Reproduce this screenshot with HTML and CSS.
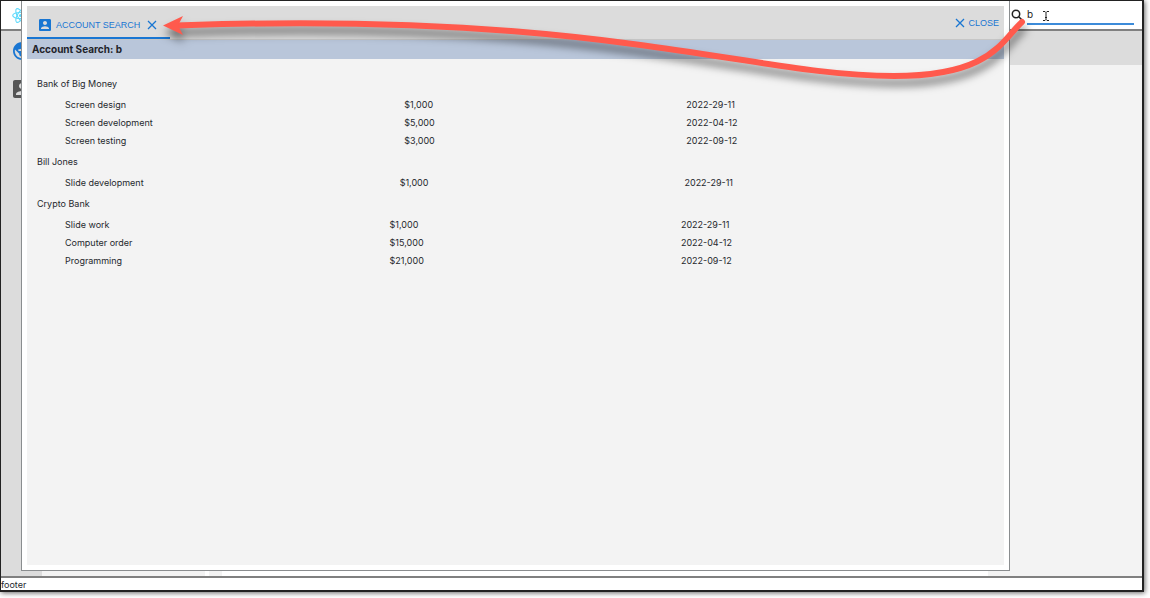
FILE: index.html
```html
<!DOCTYPE html>
<html lang="en">
<head>
<meta charset="utf-8">
<title>Account Search</title>
<link rel="stylesheet" href="styles.css">
</head>
<body>
<div class="app">
  <header class="topbar">
    <svg class="logo" viewBox="0 0 24 24" aria-hidden="true"><g fill="none" stroke="#61dafb" stroke-width="1.6"><ellipse cx="12" cy="12" rx="11" ry="4.3"/><ellipse cx="12" cy="12" rx="11" ry="4.3" transform="rotate(60 12 12)"/><ellipse cx="12" cy="12" rx="11" ry="4.3" transform="rotate(120 12 12)"/></g><circle cx="12" cy="12" r="2.2" fill="#61dafb"/></svg>
    <label class="search">
      <svg class="search-icon" viewBox="0 0 12 12" aria-hidden="true"><circle cx="5" cy="5" r="3.7"/><path d="M7.8 7.8 10.8 10.8"/></svg>
      <input class="search-input" type="text" value="b" aria-label="Search accounts">
    </label>
  </header>
  <div class="body">
    <nav class="rail">
      <a class="rail-link active" href="#home" aria-label="Public"><svg viewBox="2 2 20 20"><path d="M12 2C6.48 2 2 6.48 2 12s4.48 10 10 10 10-4.48 10-10S17.52 2 12 2zm-1 17.93c-3.95-.49-7-3.85-7-7.93 0-.62.08-1.21.21-1.79L9 15v1c0 1.1.9 2 2 2v1.93zm6.9-2.54c-.26-.81-1-1.39-1.9-1.39h-1v-3c0-.55-.45-1-1-1H8v-2h2c.55 0 1-.45 1-1V7h2c1.1 0 2-.9 2-2v-.41c2.93 1.19 5 4.06 5 7.41 0 2.08-.8 3.97-2.1 5.39z"/></svg></a>
      <a class="rail-link" href="#accounts" aria-label="Accounts"><svg viewBox="3 3 18 18"><path d="M3 5v14c0 1.1.89 2 2 2h14c1.1 0 2-.9 2-2V5c0-1.1-.9-2-2-2H5c-1.11 0-2 .9-2 2zm12 4c0 1.66-1.34 3-3 3s-3-1.34-3-3 1.34-3 3-3 3 1.34 3 3zm-9 8c0-2 4-3.1 6-3.1s6 1.1 6 3.1v1H6v-1z"/></svg></a>
    </nav>
    <main class="content">
      <div class="toolbar"></div>
      <div class="panes">
        <div class="pane pane-list"></div>
        <div class="pane pane-split"></div>
        <div class="pane pane-detail"></div>
      </div>
    </main>
  </div>
  <footer class="footer">footer</footer>

  <section class="modal" role="dialog" aria-label="Account Search">
    <div class="sheet">
      <div class="tabs">
        <div class="tab">
          <button class="tab-label" type="button"><svg class="badge" viewBox="3 3 18 18" aria-hidden="true"><path d="M3 5v14c0 1.1.89 2 2 2h14c1.1 0 2-.9 2-2V5c0-1.1-.9-2-2-2H5c-1.11 0-2 .9-2 2zm12 4c0 1.66-1.34 3-3 3s-3-1.34-3-3 1.34-3 3-3 3 1.34 3 3zm-9 8c0-2 4-3.1 6-3.1s6 1.1 6 3.1v1H6v-1z"/></svg>ACCOUNT SEARCH</button>
          <button class="tab-close" type="button" aria-label="Close tab"><svg class="cross" viewBox="0 0 10 10"><path d="M1 1 9 9M9 1 1 9"/></svg></button>
        </div>
        <button class="close" type="button"><svg class="cross" viewBox="0 0 10 10" aria-hidden="true"><path d="M1 1 9 9M9 1 1 9"/></svg>CLOSE</button>
      </div>
      <h1 class="title">Account Search: b</h1>
      <div class="results">
        <h2 class="client">Bank of Big Money</h2>
        <table class="items"><tbody>
          <tr><td>Screen design</td><td>$1,000</td><td>2022-29-11</td></tr>
          <tr><td>Screen development</td><td>$5,000</td><td>2022-04-12</td></tr>
          <tr><td>Screen testing</td><td>$3,000</td><td>2022-09-12</td></tr>
        </tbody></table>
        <h2 class="client">Bill Jones</h2>
        <table class="items"><tbody>
          <tr><td>Slide development</td><td>$1,000</td><td>2022-29-11</td></tr>
        </tbody></table>
        <h2 class="client">Crypto Bank</h2>
        <table class="items"><tbody>
          <tr><td>Slide work</td><td>$1,000</td><td>2022-29-11</td></tr>
          <tr><td>Computer order</td><td>$15,000</td><td>2022-04-12</td></tr>
          <tr><td>Programming</td><td>$21,000</td><td>2022-09-12</td></tr>
        </tbody></table>
      </div>
    </div>
  </section>

  <svg class="arrow" viewBox="0 0 1150 120" aria-hidden="true">
    <path class="arrow-line" d="M1022 22C1002 40 992 76 894 76C750 76 600 10 176 25.500"/>
    <path class="arrow-head" d="M163 25.500 183 16 178 25.500 183 35Z"/>
  </svg>
  <svg class="ibeam" viewBox="0 0 8 12" aria-hidden="true"><path d="M1 1.500H3L4 2.500 5 1.500H7M4 2.500V9.500M1 10.500H3L4 9.500 5 10.500H7M3 7.500H5"/></svg>
</div>
</body>
</html>
```
FILE: styles.css
```css
* { box-sizing: border-box; }

html, body { height: 100%; }

body {
  margin: 0;
  padding: 0 6px 6px 0;
  background: #fff;
  color: #25282d;
  font: 9px/18px Inter, "Liberation Sans", sans-serif;
}

button {
  display: flex;
  align-items: center;
  padding: 0;
  border: 0;
  background: none;
  color: #1976d2;
  font: 9px/18px "Liberation Sans", Arial, sans-serif;
}

svg { display: block; }

.app {
  position: relative;
  display: flex;
  flex-direction: column;
  height: 100%;
  border: 1px solid #222;
  border-right-width: 2px;
  border-bottom-width: 2px;
  box-shadow: 1px 1px 5px #0009;
}

.topbar {
  display: flex;
  align-items: center;
  justify-content: space-between;
  height: 30px;
  padding: 0 8px 0 11px;
  border-bottom: 2px solid #808080;
}

.logo { width: 17px; height: 17px; }

.search { display: flex; align-items: center; gap: 4px; }

.search-icon {
  width: 12px;
  height: 12px;
  fill: none;
  stroke: #222;
  stroke-width: 1.5;
}

.search-input {
  width: 107px;
  height: 20px;
  padding: 0;
  border: 0;
  border-bottom: 2px solid #3c8bd9;
  outline: 0;
  background: none;
  color: #222;
  font: 10px/18px Inter, sans-serif;
}

.body { display: flex; flex: 1; min-height: 0; }

.rail {
  display: flex;
  flex-direction: column;
  gap: 20px;
  width: 41px;
  padding: 11px 0 0 12px;
  background: #dcdcdc;
}

.rail-link { display: block; width: 18px; height: 18px; fill: #555; }
.rail-link.active { fill: #1976d2; }

.content { display: flex; flex: 1; flex-direction: column; }
.toolbar { height: 34px; background: #dcdcdc; }
.panes { display: flex; flex: 1; gap: 4px; }
.pane { background: #f3f3f3; }
.pane-list { width: 163px; }
.pane-split { width: 13px; }
.pane-detail { flex: 1; border-left: 766px solid #fff; margin-left: -4px; }

.footer {
  height: 14px;
  border-top: 2px solid #808080;
  line-height: 14px;
}

.modal {
  position: absolute;
  inset: 0 132px 19px 20px;
  padding: 5px;
  border: 1px solid #8a8d8f;
  border-top: 0;
  background: #fff;
}

.sheet { height: 100%; background: #f3f3f3; }

.tabs {
  display: flex;
  justify-content: space-between;
  height: 34px;
  border-bottom: 1px solid #c6c6c6;
  background: #dcdcdc;
}

.tab {
  display: flex;
  align-items: center;
  gap: 7px;
  height: 33px;
  padding: 6px 13px 0 12px;
  border-bottom: 2px solid #1976d2;
}

.tab-label { gap: 5px; }
.badge { width: 12px; height: 12px; fill: #1976d2; }
.cross { width: 10px; height: 10px; fill: none; stroke: #1976d2; stroke-width: 1.3; }
.close { gap: 3px; padding-right: 5px; }

.title {
  margin: 0;
  padding: 0 5px;
  height: 19px;
  background: #b9c6da;
  color: #1f2329;
  font: 700 10px/19px Inter, sans-serif;
}

.results { padding: 13px 15px 0 10px; }

.client { margin: 0; font-size: 9px; font-weight: 400; line-height: 24px; }

.items {
  display: grid;
  grid-template-columns: auto auto auto;
  margin-left: 28px;
}

.items tbody, .items tr { display: contents; }
.items td { padding: 0; }

.arrow {
  position: absolute;
  top: -1px;
  left: -1px;
  width: 1150px;
  height: 120px;
  pointer-events: none;
  filter: drop-shadow(1px 7px 4px #0008);
}

.arrow-line { fill: none; stroke: #ff5a4d; stroke-width: 6; stroke-linecap: round; }
.arrow-head { fill: #ff5a4d; }

.ibeam {
  position: absolute;
  top: 9px;
  right: 92px;
  width: 8px;
  height: 12px;
  fill: none;
  stroke: #222;
}
```
